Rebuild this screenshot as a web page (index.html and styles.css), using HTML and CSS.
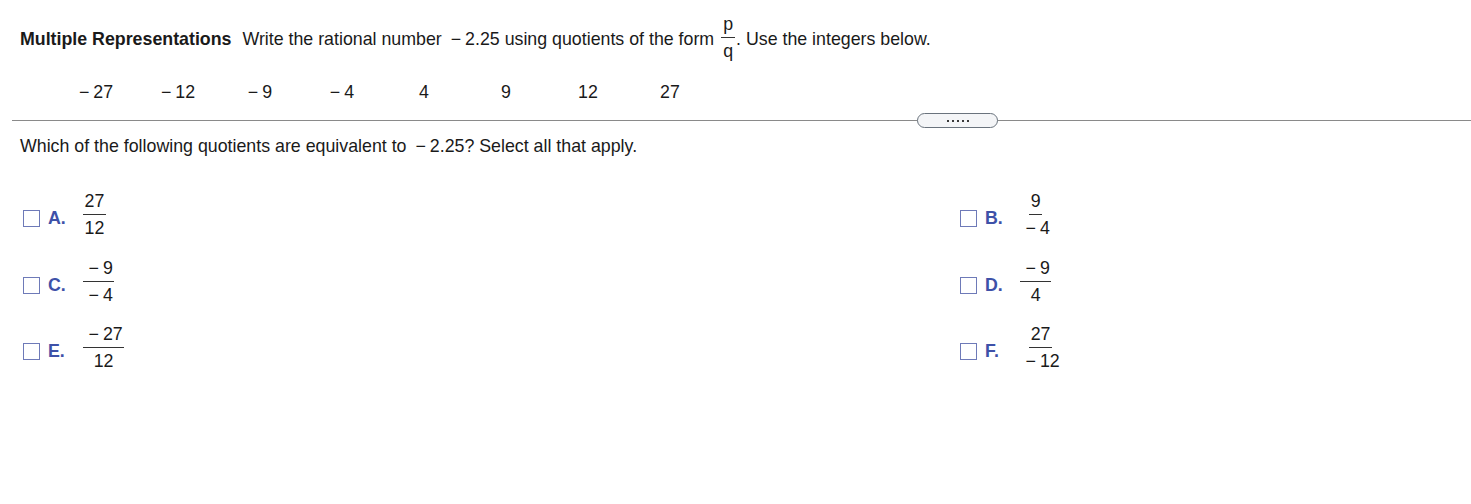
FILE: index.html
```html
<!DOCTYPE html>
<html>
<head>
<meta charset="utf-8">
<link rel="stylesheet" href="styles.css">
</head>
<body>
<div class="page">
  <div class="prompt"><span class="title">Multiple Representations</span><span class="gap"></span>Write the rational number <span class="neg">&minus;</span>2.25 using quotients of the form <span class="frac inline"><span class="num">p</span><span class="den">q</span></span>. Use the integers below.</div>
  <div class="ints">
    <span class="int"><span class="neg">&minus;</span>27</span>
    <span class="int"><span class="neg">&minus;</span>12</span>
    <span class="int"><span class="neg">&minus;</span>9</span>
    <span class="int"><span class="neg">&minus;</span>4</span>
    <span class="int">4</span>
    <span class="int">9</span>
    <span class="int">12</span>
    <span class="int">27</span>
  </div>
  <div class="divider">
    <div class="pill"><span class="dot"></span><span class="dot"></span><span class="dot"></span><span class="dot"></span><span class="dot"></span></div>
  </div>
  <div class="question">Which of the following quotients are equivalent to <span class="neg">&minus;</span>2.25? Select all that apply.</div>
  <div class="options">
    <div class="opt"><span class="box"></span><span class="lbl">A.</span><span class="frac"><span class="num">27</span><span class="den">12</span></span></div>
    <div class="opt"><span class="box"></span><span class="lbl">B.</span><span class="frac"><span class="num">9</span><span class="den"><span class="neg">&minus;</span>4</span></span></div>
    <div class="opt"><span class="box"></span><span class="lbl">C.</span><span class="frac"><span class="num"><span class="neg">&minus;</span>9</span><span class="den"><span class="neg">&minus;</span>4</span></span></div>
    <div class="opt"><span class="box"></span><span class="lbl">D.</span><span class="frac"><span class="num"><span class="neg">&minus;</span>9</span><span class="den">4</span></span></div>
    <div class="opt"><span class="box"></span><span class="lbl">E.</span><span class="frac"><span class="num"><span class="neg">&minus;</span>27</span><span class="den">12</span></span></div>
    <div class="opt"><span class="box"></span><span class="lbl">F.</span><span class="frac"><span class="num">27</span><span class="den"><span class="neg">&minus;</span>12</span></span></div>
  </div>
</div>
</body>
</html>
```
FILE: styles.css
```css
html, body {
  margin: 0;
  padding: 0;
  background: #ffffff;
}
body {
  font-family: "Liberation Sans", Arial, sans-serif;
  font-size: 17.8px;
  color: #1a1a1a;
}
.page {
  padding-top: 12px;
}
.prompt {
  padding-left: 20px;
  height: 54px;
  line-height: 54px;
  white-space: nowrap;
}
.title {
  font-weight: bold;
}
.gap {
  display: inline-block;
  width: 11px;
}
.neg {
  margin-left: 4px;
  margin-right: 4px;
}
.int .neg {
  margin-left: 0;
}
.frac {
  display: inline-flex;
  flex-direction: column;
  align-items: center;
  vertical-align: middle;
  line-height: 26px;
}
.frac .num, .frac .den {
  padding: 0 1.5px;
  line-height: 26px;
}
.frac .num {
  border-bottom: 1px solid #333;
}
.frac.inline {
  margin-left: 2px;
  margin-right: 1px;
  margin-bottom: 6px;
}
.frac.inline .num, .frac.inline .den {
  padding: 0 2px;
  line-height: 20px;
  height: 20px;
}
.frac.inline .num {
  padding-bottom: 3px;
}
.frac.inline .den {
  padding-top: 3px;
}
.ints {
  display: flex;
  padding-left: 55px;
  height: 30px;
  align-items: center;
  margin-top: 11px;
}
.int {
  width: 82px;
  text-align: center;
}
.divider {
  margin: 13px 0 0 12px;
  border-top: 1px solid #8a8a8a;
  position: relative;
  height: 0;
}
.pill {
  position: absolute;
  left: 905px;
  top: -8px;
  width: 79px;
  height: 13px;
  border: 1px solid #6a737d;
  border-radius: 8px;
  background: #f4f5f7;
  display: flex;
  align-items: center;
  justify-content: center;
  gap: 3px;
}
.dot {
  width: 2px;
  height: 2px;
  background: #3a3a3a;
}
.question {
  padding-left: 20px;
  margin-top: 14px;
  height: 22px;
  line-height: 22px;
  white-space: nowrap;
}
.options {
  display: grid;
  grid-template-columns: 937px 1fr;
  padding-left: 23px;
  margin-top: 31px;
  row-gap: 13px;
}
.opt {
  display: flex;
  align-items: center;
  height: 53.5px;
}
.box {
  width: 15px;
  height: 15px;
  border: 1.5px solid #6e7ab8;
  box-sizing: content-box;
  margin-right: 8px;
  position: relative;
  top: 4px;
}
.lbl {
  font-weight: bold;
  color: #3e51a8;
  width: 35px;
  position: relative;
  top: 4px;
}
```
